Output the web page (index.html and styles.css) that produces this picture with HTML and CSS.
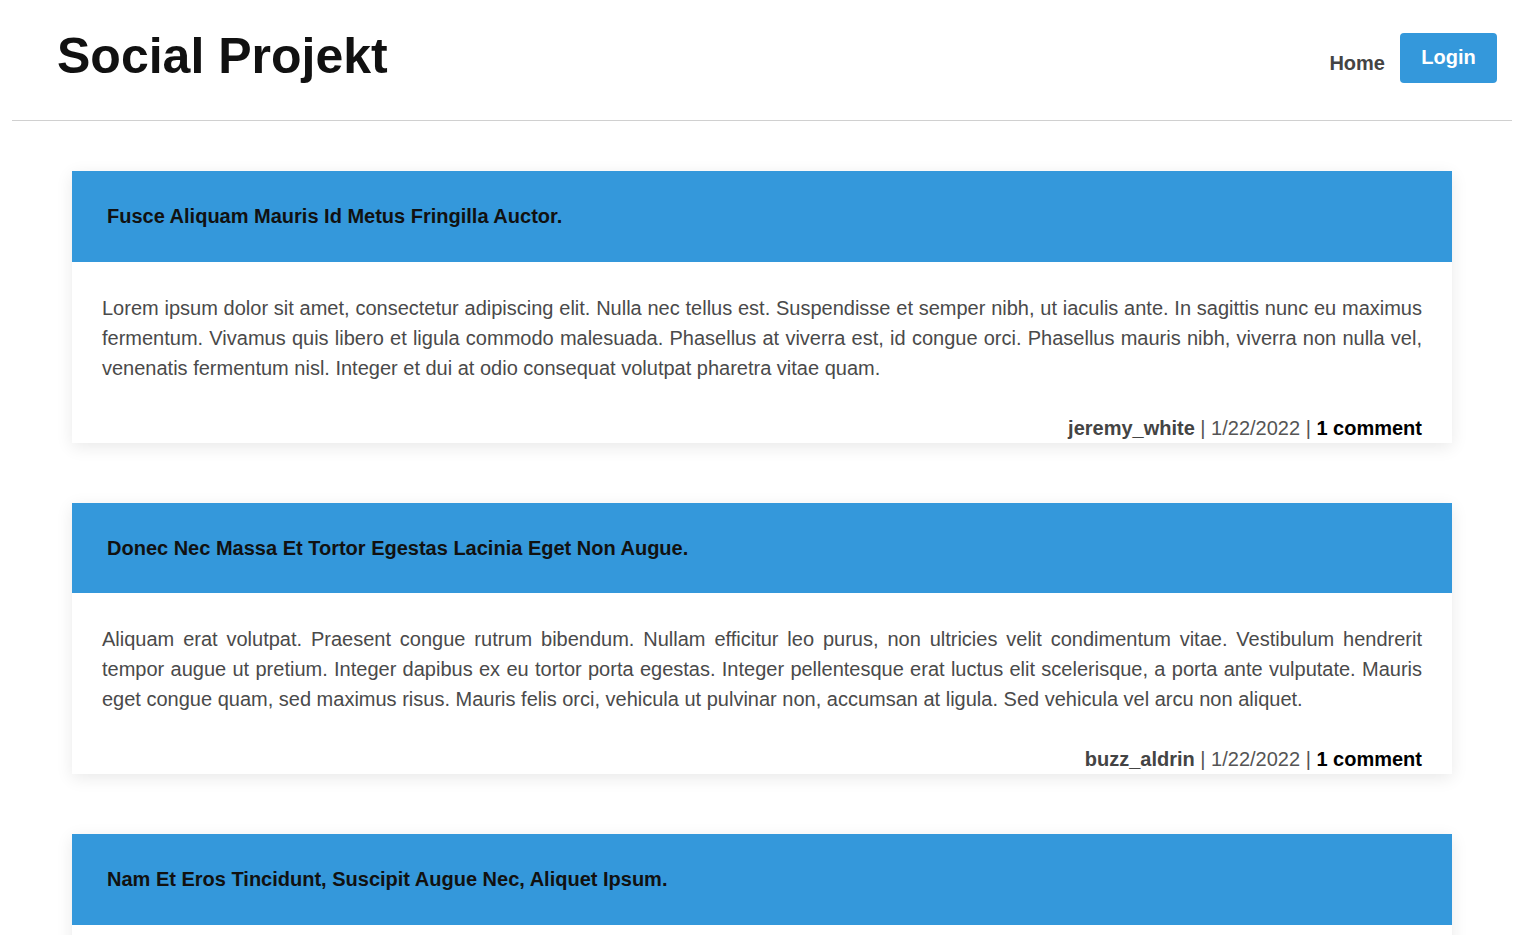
FILE: index.html
```html
<!DOCTYPE html>
<html lang="en">
<head>
<meta charset="utf-8">
<title>Social Projekt</title>
<link rel="stylesheet" href="styles.css">
</head>
<body>
<header class="site-header">
  <h1 class="brand">Social Projekt</h1>
  <nav class="nav">
    <a class="nav-link" href="#">Home</a>
    <a class="btn-login" href="#">Login</a>
  </nav>
</header>
<main class="posts">
  <article class="post">
    <div class="post-head"><h2 class="post-title">Fusce Aliquam Mauris Id Metus Fringilla Auctor.</h2></div>
    <div class="post-body">
      <p class="post-text">Lorem ipsum dolor sit amet, consectetur adipiscing elit. Nulla nec tellus est. Suspendisse et semper nibh, ut iaculis ante. In sagittis nunc eu maximus fermentum. Vivamus quis libero et ligula commodo malesuada. Phasellus at viverra est, id congue orci. Phasellus mauris nibh, viverra non nulla vel, venenatis fermentum nisl. Integer et dui at odio consequat volutpat pharetra vitae quam.</p>
      <div class="post-meta"><span class="author">jeremy_white</span> | 1/22/2022 | <span class="comments">1 comment</span></div>
    </div>
  </article>
  <article class="post">
    <div class="post-head"><h2 class="post-title">Donec Nec Massa Et Tortor Egestas Lacinia Eget Non Augue.</h2></div>
    <div class="post-body">
      <p class="post-text">Aliquam erat volutpat. Praesent congue rutrum bibendum. Nullam efficitur leo purus, non ultricies velit condimentum vitae. Vestibulum hendrerit tempor augue ut pretium. Integer dapibus ex eu tortor porta egestas. Integer pellentesque erat luctus elit scelerisque, a porta ante vulputate. Mauris eget congue quam, sed maximus risus. Mauris felis orci, vehicula ut pulvinar non, accumsan at ligula. Sed vehicula vel arcu non aliquet.</p>
      <div class="post-meta"><span class="author">buzz_aldrin</span> | 1/22/2022 | <span class="comments">1 comment</span></div>
    </div>
  </article>
  <article class="post">
    <div class="post-head"><h2 class="post-title">Nam Et Eros Tincidunt, Suscipit Augue Nec, Aliquet Ipsum.</h2></div>
    <div class="post-body">
      <p class="post-text">Curabitur ac lectus vel nibh tristique tempor. Donec ut diam non mi ultrices dignissim. Etiam vitae dolor at metus scelerisque facilisis. Suspendisse potenti. Vestibulum ante ipsum primis in faucibus orci luctus et ultrices posuere cubilia curae.</p>
      <div class="post-meta"><span class="author">neil_armstrong</span> | 1/22/2022 | <span class="comments">1 comment</span></div>
    </div>
  </article>
</main>
</body>
</html>
```
FILE: styles.css
```css
* { box-sizing: border-box; }
html, body { margin: 0; padding: 0; background: #fff; }
body {
  font-family: "Liberation Sans", Arial, sans-serif;
  color: #444;
}
.site-header {
  margin: 0 14px 0 12px;
  height: 121px;
  border-bottom: 1px solid #d0d0d0;
  display: flex;
  align-items: flex-start;
  justify-content: space-between;
  padding: 0 15px 0 45px;
}
.brand {
  margin: 24px 0 0 0;
  font-size: 50px;
  line-height: 64px;
  font-weight: 700;
  color: #111;
}
.nav {
  display: flex;
  align-items: flex-start;
  gap: 15px;
  margin-top: 33px;
}
.nav-link {
  font-size: 20px;
  font-weight: 700;
  color: #444;
  text-decoration: none;
  margin-top: 18px;
  line-height: 24px;
}
.btn-login {
  display: block;
  width: 97px;
  text-align: center;
  background: #3498db;
  color: #fff;
  font-size: 20px;
  font-weight: 700;
  text-decoration: none;
  border-radius: 4px;
  height: 50px;
  line-height: 48px;
}
.posts {
  padding: 50px 74px 40px 72px;
  display: flex;
  flex-direction: column;
  gap: 60px;
}
.post {
  background: #fff;
  box-shadow: 0 4px 16px rgba(0, 0, 0, 0.09);
}
.post-head {
  background: #3498db;
  height: 90.5px;
  display: flex;
  align-items: center;
  padding: 0 35px;
}
.post-title {
  margin: 0;
  font-size: 20px;
  font-weight: 700;
  color: #111;
  line-height: 20px;
}
.post-body {
  padding: 31px 30px 0 30px;
}
.post-text {
  margin: 0;
  font-size: 20px;
  line-height: 30px;
  text-align: justify;
  color: #4a4a4a;
}
.post-meta {
  margin-top: 30px;
  text-align: right;
  font-size: 20px;
  line-height: 30px;
  color: #555;
}
.author { font-weight: 700; color: #444; }
.comments { font-weight: 700; color: #000; }
```
